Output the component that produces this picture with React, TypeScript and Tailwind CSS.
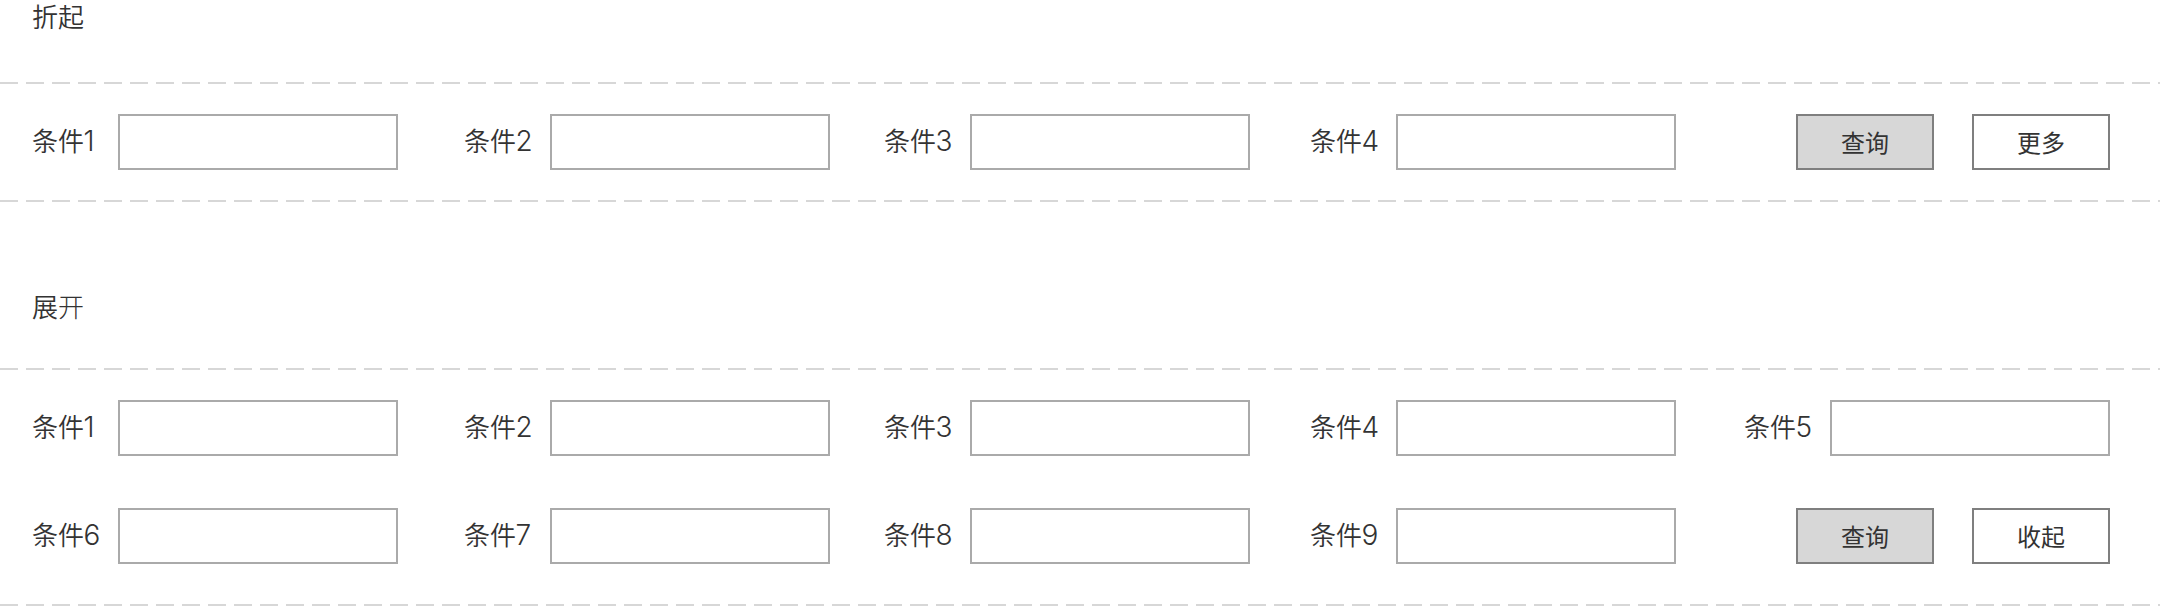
import React from 'react'

type FieldProps = {
  index: number
}

const Divider: React.FC = () => (
  <div className="h-0.5 shrink-0 bg-[repeating-linear-gradient(to_right,#d7d7d7_0_18px,transparent_18px_26px)]" />
)

const Field: React.FC<FieldProps> = ({ index }) => (
  <label className="flex h-14 w-[366px]">
    <span className="w-[86px] whitespace-nowrap text-[26px] leading-[52px] font-[350]">
      条件<span className="-ml-[0.5px] font-['Inter',sans-serif] text-[28px] leading-none font-[270]">{index}</span>
    </span>
    <input type="text" className="h-14 w-[280px] border-2 border-[#aaaaaa] bg-white px-3 outline-none" />
  </label>
)

const Actions: React.FC<{ toggleLabel: string }> = ({ toggleLabel }) => (
  <div className="flex w-[366px] justify-end gap-[38px] text-2xl leading-none">
    <button type="button" className="h-14 w-[138px] border-2 border-[#7f7f7f] bg-[#d7d7d7]">
      查询
    </button>
    <button type="button" className="h-14 w-[138px] border-2 border-[#7f7f7f] bg-white">
      {toggleLabel}
    </button>
  </div>
)

const gridClass = 'grid grid-cols-[432px_420px_426px_434px_366px] gap-y-[52px] pl-8'

export default function App() {
  return (
    <div className="flex h-[606px] w-[2160px] flex-col overflow-hidden bg-white font-['Noto_Sans_CJK_SC',sans-serif] text-[#333333]">
      <h2 className="h-[82px] pl-8 text-[26px] leading-[32px] font-[350]">折起</h2>
      <Divider />
      <form className={`${gridClass} h-[116px] pt-[30px]`}>
        {[1, 2, 3, 4].map((index) => (
          <Field key={index} index={index} />
        ))}
        <Actions toggleLabel="更多" />
      </form>
      <Divider />

      <h2 className="h-[166px] pt-[88px] pl-8 text-[26px] leading-[32px] font-[350]">
        展<span className="font-light">开</span>
      </h2>
      <Divider />
      <form className={`${gridClass} h-[234px] content-start pt-[30px]`}>
        {[1, 2, 3, 4, 5, 6, 7, 8, 9].map((index) => (
          <Field key={index} index={index} />
        ))}
        <Actions toggleLabel="收起" />
      </form>
      <Divider />
    </div>
  )
}
